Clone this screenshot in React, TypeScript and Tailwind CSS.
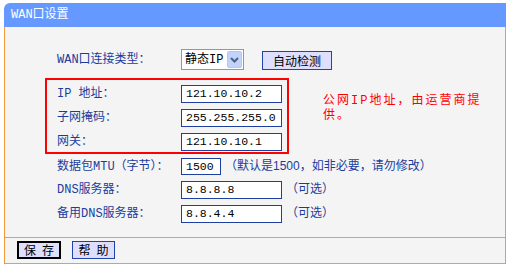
import React from "react";

const LBL = "text-[12px] text-[#1c3c9c] font-['Liberation_Mono','Noto_Sans_CJK_SC',monospace] leading-[14px]";
const INPUT =
  "border border-[#1e3fa0] bg-white flex items-center pl-[4px] text-[11.5px] text-black font-['Liberation_Mono','Noto_Sans_CJK_SC',monospace] leading-[14px] whitespace-nowrap overflow-hidden";

function Row({ label, children, h = "h-[18px]" }: { label: React.ReactNode; children: React.ReactNode; h?: string }) {
  return (
    <div className={`flex items-center ${h}`}>
      <div className={`w-[124px] ${LBL} whitespace-nowrap`}>{label}</div>
      {children}
    </div>
  );
}

export default function App() {
  return (
    <div className="w-[523px] h-[276px] bg-white pt-[3px] pl-[4px] overflow-hidden">
      <div className="w-[502px] flex flex-col">
        <div className="h-[24px] bg-[#6699ff] rounded-tl-[6px] flex items-center pl-[7px] text-white text-[12px] font-['Liberation_Mono','Noto_Sans_CJK_SC',monospace]">
          WAN口设置
        </div>
        <div className="bg-[#f4f4f4] border-l border-r border-[#f49b3f] h-[210px] pt-[22px] pl-[52px] flex flex-col">
          {/* Row 1 */}
          <div className="flex items-center h-[21px]">
            <div className={`w-[124px] ${LBL} whitespace-nowrap`}>WAN口连接类型：</div>
            <div className="w-[63px] h-[21px] border border-[#7f9db9] bg-white flex items-center justify-between pl-[3px] pr-[1px]">
              <span className="text-[12px] text-black font-['Liberation_Mono','Noto_Sans_CJK_SC',monospace] leading-[14px]">静态IP</span>
              <div className="w-[15px] h-[17px] rounded-[2px] bg-[#c1d3fb] border border-[#b5c8f3] flex items-center justify-center">
                <svg width="9" height="6" viewBox="0 0 9 6">
                  <path d="M1 1 L4.5 4.5 L8 1" stroke="#4d6185" strokeWidth="2" fill="none" />
                </svg>
              </div>
            </div>
            <div className="ml-[18px] w-[70px] h-[19px] mt-[2px] border border-[#2244aa] bg-[#dedeff] flex items-center justify-center text-[12px] text-black font-['Noto_Sans_CJK_SC',sans-serif] leading-[14px]">
              自动检测
            </div>
          </div>

          {/* Red box row */}
          <div className="flex items-start mt-[8px]">
            <div className="-ml-[12px] w-[244px] h-[76px] border-2 border-[#ff0000] pt-[5px] pl-[10px] flex flex-col gap-[6px]">
              <Row label={<span>IP 地址：</span>}>
                <div className={`${INPUT} w-[101px] h-[18px]`}>121.10.10.2</div>
              </Row>
              <Row label="子网掩码：">
                <div className={`${INPUT} w-[101px] h-[18px]`}>255.255.255.0</div>
              </Row>
              <Row label="网关：">
                <div className={`${INPUT} w-[101px] h-[18px]`}>121.10.10.1</div>
              </Row>
            </div>
            <div className="ml-[34px] mt-[16px] text-[12px] leading-[15px] tracking-[2px] text-[#ff0000] font-['Liberation_Mono','Noto_Sans_CJK_SC',monospace] whitespace-nowrap">
              公网IP地址，由运营商提
              <br />
              供。
            </div>
          </div>

          {/* MTU */}
          <div className="mt-[4px]">
            <Row label="数据包MTU（字节）：" h="h-[17px]">
              <div className={`${INPUT} w-[40px] h-[17px]`}>1500</div>
              <span className={`ml-[4px] ${LBL} whitespace-nowrap`}>
                （默认是<span className="font-['Liberation_Sans',sans-serif]">1500</span>，如非必要，请勿修改）
              </span>
            </Row>
          </div>
          <div className="mt-[6px]">
            <Row label="DNS服务器：">
              <div className={`${INPUT} w-[101px] h-[18px]`}>8.8.8.8</div>
              <span className={`ml-[4px] ${LBL} whitespace-nowrap`}>（可选）</span>
            </Row>
          </div>
          <div className="mt-[6px]">
            <Row label="备用DNS服务器：">
              <div className={`${INPUT} w-[101px] h-[18px]`}>8.8.4.4</div>
              <span className={`ml-[4px] ${LBL} whitespace-nowrap`}>（可选）</span>
            </Row>
          </div>
        </div>
        <div className="bg-[#f4f4f4] border border-[#f49b3f] h-[27px] pt-[3px] pl-[12px] flex items-start gap-[11px]">
          <div className="w-[44px] h-[18px] border-2 border-black bg-[#dedeff] flex items-center justify-center gap-[6px] text-[12px] text-black font-['Noto_Sans_CJK_SC',sans-serif] leading-[14px]">
            <span>保</span>
            <span>存</span>
          </div>
          <div className="w-[43px] h-[18px] border border-[#2244aa] bg-[#dedeff] flex items-center justify-center gap-[6px] text-[12px] text-black font-['Noto_Sans_CJK_SC',sans-serif] leading-[14px]">
            <span>帮</span>
            <span>助</span>
          </div>
        </div>
      </div>
    </div>
  );
}
